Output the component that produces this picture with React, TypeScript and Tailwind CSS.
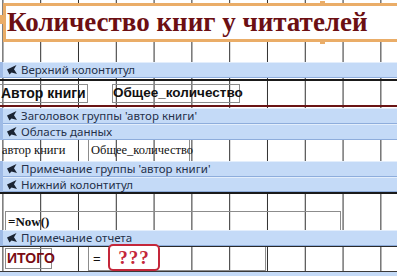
import React from 'react';

const GRID =
  'bg-[linear-gradient(to_right,#2e2e2e_1px,transparent_1px)] bg-size-[37.8px_100%] bg-position-[2.4px_0]';

const SectionIcon: React.FC = () => (
  <svg width="11" height="10" viewBox="0 0 11 10" className="shrink-0">
    <polygon points="0,4.5 9.5,0 7,4.2 10,9 4.5,7.5 2.5,9.5" fill="#1b2433" />
  </svg>
);

const SectionBar: React.FC<{ label: string; h?: string }> = ({ label, h = 'h-[16px]' }) => (
  <div className={`${h} flex shrink-0`}>
    <div className="w-[3px] bg-[#9fbbe6]" />
    <div className="flex-1 flex items-center gap-[3px] pl-[4px] bg-[#c4daf7] border-t border-[#e3eefc] border-b border-b-[#8eaddc]">
      <SectionIcon />
      <span className="text-[11.5px] leading-none text-[#24314a] font-['Noto_Sans',sans-serif] whitespace-nowrap">
        {label}
      </span>
    </div>
  </div>
);

export default function App() {
  return (
    <div className="w-[397px] h-[276px] overflow-hidden bg-white flex flex-col">
      {/* Заголовок отчета */}
      <div className={`h-[62px] shrink-0 relative ${GRID}`}>
        <div className="mt-[3px] ml-[3px] w-[400px] h-[39px] border-[3px] border-r-0 border-[#eaad68] bg-white flex items-center pl-[1px]">
          <span className="text-[27px] leading-none font-bold text-[#6c0f13] font-['Liberation_Serif',serif] whitespace-nowrap">
            Количество книг у читателей
          </span>
        </div>
        <div className="absolute left-0 top-[15px] w-[5px] h-[9px] bg-[#eaad68]" />
        <div className="absolute left-[320px] top-[1px] w-[5px] h-[4px] bg-[#eaad68]" />
        <div className="absolute left-[320px] top-[40px] w-[5px] h-[4px] bg-[#eaad68]" />
      </div>

      <SectionBar label="Верхний колонтитул" />

      {/* Верхний колонтитул */}
      <div className={`h-[30px] shrink-0 flex flex-col ${GRID}`}>
        <div className="mt-[1px] h-[2px] bg-[#1a1a1a]" />
        <div className="mt-[3px] h-[19px] flex font-['Liberation_Sans',sans-serif] font-bold text-[#111]">
          <div className="w-[88px] border border-l-0 border-[#8c8c8c] flex items-center pl-[1px] text-[14px] whitespace-nowrap">
            Автор книги
          </div>
          <div className="ml-[24px] w-[128px] border border-[#8c8c8c] flex items-center text-[13.5px] whitespace-nowrap">
            Общее_количество
          </div>
        </div>
        <div className="mt-[2px] h-[2px] bg-[#6a1414]" />
      </div>

      <SectionBar label="Заголовок группы 'автор книги'" />
      <SectionBar label="Область данных" />

      {/* Область данных */}
      <div className={`h-[21px] shrink-0 flex font-['Liberation_Serif',serif] text-[12.5px] text-[#111] ${GRID}`}>
        <div className="w-[78px] flex items-center pl-[2px] whitespace-nowrap">автор книги</div>
        <div className="ml-[10px] w-[102px] border-l border-r border-[#8c8c8c] flex items-center pl-[2px] whitespace-nowrap">
          Общее_количество
        </div>
      </div>

      <SectionBar label="Примечание группы 'автор книги'" />
      <SectionBar label="Нижний колонтитул" h="h-[15px]" />

      {/* Нижний колонтитул */}
      <div className={`h-[38px] shrink-0 flex flex-col border-t-2 border-[#1a1a1a] ${GRID}`}>
        <div className="mt-[17px] ml-[5px] w-[336px] flex-1 border border-b-0 border-[#8c8c8c] flex items-center pl-[2px]">
          <span className="font-['Liberation_Serif',serif] font-bold text-[13px] text-[#111]">=Now()</span>
        </div>
      </div>

      <SectionBar label="Примечание отчета" />

      {/* Примечание отчета */}
      <div className={`h-[25px] shrink-0 relative flex items-start border-t border-[#2a2a2a] ${GRID}`}>
        <div className="mt-[1px] ml-[5px] w-[47px] h-[21px] border border-[#8c8c8c] flex items-center pl-[1px]">
          <span className="font-['Liberation_Sans',sans-serif] font-bold text-[14px] text-[#7a0b12]">ИТОГО</span>
        </div>
        <div className="ml-[36px] w-[178px] h-[24px] border border-t-0 border-[#8c8c8c] flex items-center pl-[4px]">
          <span className="font-['Liberation_Sans',sans-serif] text-[13px] text-[#111]">=</span>
        </div>
        <div className="absolute left-[108px] top-[-3px] w-[52px] h-[27px] rounded-[5px] border-2 border-[#c4263a] bg-white flex items-center justify-center">
          <span className="font-['Liberation_Serif',serif] font-bold text-[19px] leading-none tracking-[1px] text-[#c4263a]">???</span>
        </div>
      </div>

      <div className="flex-1 bg-[#c4daf7] border-t border-[#3a3a3a]" />
    </div>
  );
}
